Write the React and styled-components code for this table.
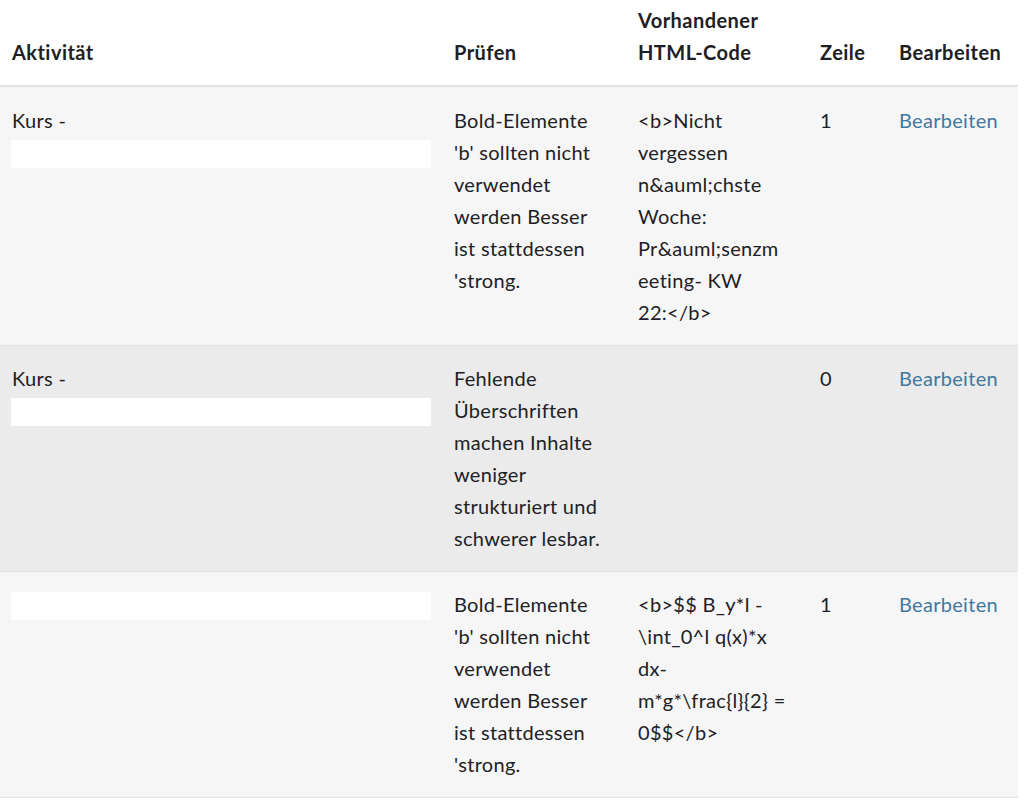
import React from "react";
import styled, { createGlobalStyle } from "styled-components";

const GlobalStyle = createGlobalStyle`
  html, body { margin: 0; padding: 0; background: #ffffff; }
  body {
    font-family: Lato, "Noto Sans", "Liberation Sans", sans-serif;
    color: #1d2125;
  }
  th, td { box-sizing: border-box; }
`;

const Table = styled.table`
  width: 1018px;
  border-collapse: collapse;
  table-layout: fixed;
  font-size: 20px;
  line-height: 32px;
  letter-spacing: 0.3px;
`;

const HeadCell = styled.th`
  width: ${p => p.$w}px;
  text-align: left;
  vertical-align: bottom;
  font-weight: 700;
  letter-spacing: 0.45px;
  padding: 4px ${p => p.$pr || 12}px 17px 12px;
  border-bottom: 2px solid #dee2e6;
  color: #1d2125;
`;

const Row = styled.tr`
  background: ${p => (p.$active ? "#ebebeb" : "#f6f6f6")};
  border-bottom: 1px solid #dee2e6;
`;

const Cell = styled.td`
  vertical-align: top;
  padding: ${p => (p.$first ? 17 : 16)}px ${p => p.$pr || 12}px 17px 12px;
  overflow-wrap: break-word;
  word-wrap: break-word;
`;

const Redaction = styled.span`
  display: block;
  width: 420px;
  height: 28px;
  margin: 4px 0 0 -1px;
  background: #ffffff;
`;

const EditLink = styled.a`
  color: #41789f;
  text-decoration: none;
  cursor: pointer;
`;

const WJ = "\u2060";

const rows = [
  {
    course: true,
    check: "Bold-Elemente 'b' sollten nicht verwendet werden Besser ist stattdessen 'strong.",
    code: `<b>Nicht vergessen n&auml;chste Woche: Pr&auml;senzmeeting- KW 22:${WJ}</b>`,
    line: "1",
  },
  {
    course: true,
    active: true,
    check: "Fehlende Überschriften machen Inhalte weniger strukturiert und schwerer lesbar.",
    code: "",
    line: "0",
  },
  {
    course: false,
    check: "Bold-Elemente 'b' sollten nicht verwendet werden Besser ist stattdessen 'strong.",
    code: `<b>$$ B_y*l - \\int_0^l q(x)*x dx- m*g*\\frac{l}${WJ}{2} = 0$$</b>`,
    line: "1",
  },
];

export default function App() {
  return (
    <>
      <GlobalStyle />
      <Table>
        <thead>
          <tr>
            <HeadCell $w={442}>Aktivität</HeadCell>
            <HeadCell $w={184} $pr={22}>Prüfen</HeadCell>
            <HeadCell $w={182} $pr={22}>Vorhandener HTML-Code</HeadCell>
            <HeadCell $w={79}>Zeile</HeadCell>
            <HeadCell $w={131}>Bearbeiten</HeadCell>
          </tr>
        </thead>
        <tbody>
          {rows.map((r, i) => (
            <Row key={i} $active={r.active}>
              <Cell $first={i === 0}>
                {r.course && "Kurs -"}
                <Redaction />
              </Cell>
              <Cell $first={i === 0} $pr={22}>{r.check}</Cell>
              <Cell $first={i === 0} $pr={22}>{r.code}</Cell>
              <Cell $first={i === 0}>{r.line}</Cell>
              <Cell $first={i === 0}>
                <EditLink>Bearbeiten</EditLink>
              </Cell>
            </Row>
          ))}
        </tbody>
      </Table>
    </>
  );
}
